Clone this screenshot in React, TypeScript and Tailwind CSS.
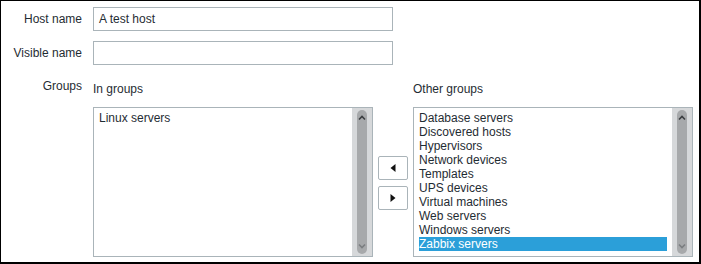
import React from "react";

const OTHER = [
  "Database servers",
  "Discovered hosts",
  "Hypervisors",
  "Network devices",
  "Templates",
  "UPS devices",
  "Virtual machines",
  "Web servers",
  "Windows servers",
  "Zabbix servers",
];

function Scrollbar() {
  return (
    <div className="relative w-[20px] h-full bg-[#d6d8da] shrink-0">
      <div className="absolute left-[5px] top-[2px] bottom-[2px] w-[10px] rounded-full bg-[#a7a9ab]" />
      <svg className="absolute left-[6px] top-[7px]" width="8" height="6" viewBox="0 0 8 6">
        <polyline points="1,4.5 4,1.5 7,4.5" fill="none" stroke="#3a3d40" strokeWidth="1.6" />
      </svg>
      <svg className="absolute left-[6px] bottom-[7px]" width="8" height="6" viewBox="0 0 8 6">
        <polyline points="1,1.5 4,4.5 7,1.5" fill="none" stroke="#7b7e81" strokeWidth="1.6" />
      </svg>
    </div>
  );
}

function ListBox({ items, selected }: { items: string[]; selected?: string }) {
  return (
    <div className="flex w-[280px] h-[150px] border border-[#aab4b9] bg-white shrink-0">
      <div className="flex-1 px-[5px] pt-[3px] flex flex-col">
        {items.map((it) => (
          <div
            key={it}
            className={
              it === selected
                ? "h-[14px] leading-[14px] bg-[#2b9fd9] text-white whitespace-nowrap"
                : "h-[14px] leading-[14px] whitespace-nowrap"
            }
          >
            {it}
          </div>
        ))}
      </div>
      <Scrollbar />
    </div>
  );
}

function ArrowButton({ dir }: { dir: "left" | "right" }) {
  return (
    <div className="w-[30px] h-[24px] border border-[#aab4b9] rounded-[2px] bg-white flex items-center justify-center">
      <svg width="6" height="8" viewBox="0 0 6 8">
        {dir === "left" ? (
          <polygon points="5.5,0 5.5,8 0.5,4" fill="#111" />
        ) : (
          <polygon points="0.5,0 0.5,8 5.5,4" fill="#111" />
        )}
      </svg>
    </div>
  );
}

export default function App() {
  return (
    <div
      className="w-[701px] h-[264px] bg-white border-black border-t border-l border-r-2 border-b-2 text-[12px] leading-[14px] text-[#1f2c33]"
      style={{ fontFamily: '"Liberation Sans", Arial, sans-serif' }}
    >
      <div className="pt-[6px]">
        <div className="flex items-center">
          <div className="w-[81px] text-right">Host name</div>
          <div className="ml-[11px] w-[300px] h-[24px] border border-[#aab4b9] flex items-center pl-[5px]">
            A test host
          </div>
        </div>
        <div className="flex items-center mt-[10px]">
          <div className="w-[81px] text-right">Visible name</div>
          <div className="ml-[11px] w-[300px] h-[24px] border border-[#aab4b9]" />
        </div>
        <div className="flex mt-[10px]">
          <div className="w-[81px] text-right pt-[4px]">Groups</div>
          <div className="ml-[11px] flex flex-col">
            <div className="flex pt-[7px]">
              <div className="w-[320px]">In groups</div>
              <div>Other groups</div>
            </div>
            <div className="flex items-center mt-[11px]">
              <ListBox items={["Linux servers"]} />
              <div className="flex flex-col gap-[6px] mx-[5px] mt-[2px]">
                <ArrowButton dir="left" />
                <ArrowButton dir="right" />
              </div>
              <ListBox items={OTHER} selected="Zabbix servers" />
            </div>
          </div>
        </div>
      </div>
    </div>
  );
}
